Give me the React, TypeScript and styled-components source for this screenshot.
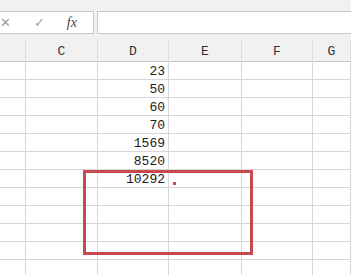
import React from 'react';
import styled, { createGlobalStyle } from 'styled-components';

const GlobalStyle = createGlobalStyle`
  body {
    margin: 0;
    background: #ffffff;
    font-family: 'Liberation Mono', 'DejaVu Sans Mono', monospace;
    overflow: hidden;
  }
`;

const StyledSheet = styled.div`
  position: relative;
  width: 351px;
  height: 275px;
  overflow: hidden;
  background: #ffffff;
`;

const StyledFormulaBar = styled.div`
  height: 40px;
  box-sizing: border-box;
  padding-top: 11px;
  background: #f1f1f1;
  display: flex;
  align-items: flex-start;
  gap: 3px;
`;

const StyledIconBox = styled.div`
  width: 94px;
  height: 23px;
  box-sizing: border-box;
  background: #ffffff;
  border: 1px solid #c8c8c8;
  border-left: none;
  display: flex;
  align-items: center;
`;

const StyledIcon = styled.span<{ $left: number; $dark?: boolean }>`
  margin-left: ${(p) => p.$left}px;
  color: ${(p) => (p.$dark ? '#4a4a4a' : '#a0a0a0')};
  font-family: ${(p) =>
    p.$dark ? "'Liberation Serif', serif" : "'DejaVu Sans', sans-serif"};
  font-style: ${(p) => (p.$dark ? 'italic' : 'normal')};
  font-weight: ${(p) => (p.$dark ? 'normal' : 'bold')};
  font-size: ${(p) => (p.$dark ? 14 : 13)}px;
  line-height: 1;
`;

const StyledInput = styled.div`
  flex: 1;
  height: 23px;
  box-sizing: border-box;
  background: #ffffff;
  border: 1px solid #c8c8c8;
  border-right: none;
`;

const StyledGrid = styled.div`
  display: grid;
  grid-template-columns: 26px 72px 71px 73px 71px 1fr;
`;

const StyledHeadCell = styled.div`
  height: 22px;
  box-sizing: border-box;
  background: #f1f1f1;
  border-bottom: 1px solid #c6c6c6;
  border-right: 1px solid #dcdcdc;
  color: #333333;
  font-size: 13px;
  line-height: 24px;
  text-align: center;
`;

const StyledCell = styled.div<{ $num?: boolean }>`
  height: 18px;
  box-sizing: border-box;
  border-bottom: 1px solid #d6d6d6;
  border-right: 1px solid #d6d6d6;
  color: #1a1a1a;
  font-size: 13px;
  line-height: 20px;
  text-align: ${(p) => (p.$num ? 'right' : 'left')};
  padding-right: 3px;
  white-space: nowrap;
  overflow: hidden;
`;

const StyledHighlight = styled.div`
  position: absolute;
  left: 83px;
  top: 170px;
  width: 170px;
  height: 85px;
  box-sizing: border-box;
  border: 3px solid #c8484f;
`;

const StyledDot = styled.div`
  position: absolute;
  left: 173px;
  top: 182px;
  width: 3px;
  height: 3px;
  background: #c8484f;
`;

const columns = ['', 'C', 'D', 'E', 'F', 'G'];
const values = ['23', '50', '60', '70', '1569', '8520', '10292'];
const rowCount = 12;

export default function App() {
  return (
    <>
      <GlobalStyle />
      <StyledSheet>
        <StyledFormulaBar>
          <StyledIconBox>
            <StyledIcon $left={0}>✕</StyledIcon>
            <StyledIcon $left={23}>✓</StyledIcon>
            <StyledIcon $left={22} $dark>
              fx
            </StyledIcon>
          </StyledIconBox>
          <StyledInput />
        </StyledFormulaBar>
        <StyledGrid>
          {columns.map((c, i) => (
            <StyledHeadCell key={'h' + i}>{c}</StyledHeadCell>
          ))}
          {Array.from({ length: rowCount }).map((_, r) =>
            columns.map((c, i) => (
              <StyledCell key={r + '-' + i} $num={c === 'D'}>
                {c === 'D' ? values[r] || '' : ''}
              </StyledCell>
            ))
          )}
        </StyledGrid>
        <StyledHighlight />
        <StyledDot />
      </StyledSheet>
    </>
  );
}
